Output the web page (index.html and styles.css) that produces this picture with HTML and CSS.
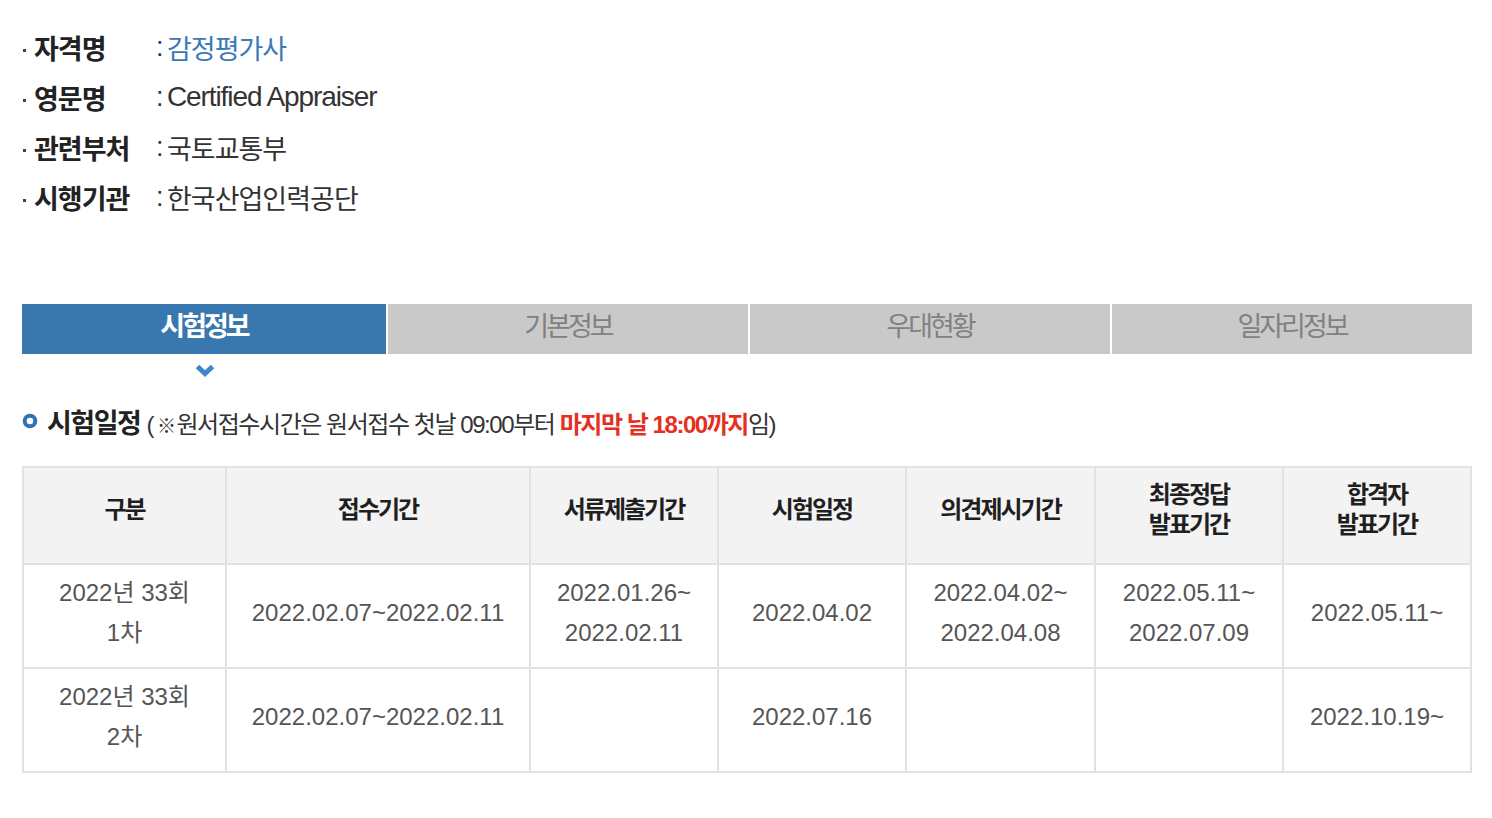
FILE: index.html
```html
<!DOCTYPE html>
<html lang="ko">
<head>
<meta charset="utf-8">
<title>감정평가사</title>
<link rel="stylesheet" href="styles.css">
</head>
<body>
<div class="page">
  <ul class="info">
    <li class="info-row"><span class="info-label">자격명</span><span class="info-colon">:</span><span class="info-value info-value--link">감정평가사</span></li>
    <li class="info-row"><span class="info-label">영문명</span><span class="info-colon">:</span><span class="info-value info-value--en">Certified Appraiser</span></li>
    <li class="info-row"><span class="info-label">관련부처</span><span class="info-colon">:</span><span class="info-value">국토교통부</span></li>
    <li class="info-row"><span class="info-label">시행기관</span><span class="info-colon">:</span><span class="info-value">한국산업인력공단</span></li>
  </ul>

  <nav class="tabs">
    <a class="tab tab--active">시험정보<svg class="tab-chevron" width="20" height="13" viewBox="0 0 20 13"><polyline points="2.5,2.5 10,9.5 17.5,2.5" fill="none" stroke="#3d86c8" stroke-width="5" stroke-linejoin="miter"/></svg></a>
    <a class="tab">기본정보</a>
    <a class="tab">우대현황</a>
    <a class="tab">일자리정보</a>
  </nav>

  <h3 class="section-title">
    <svg class="section-bullet" width="16" height="16" viewBox="0 0 16 16"><circle cx="8" cy="8" r="5.3" fill="#fff" stroke="#2f72b6" stroke-width="4"/></svg>
    <span class="section-name">시험일정</span>
    <span class="section-note">(<span class="note-mark">※</span>원서접수시간은 원서접수 첫날 09:00부터 <strong class="note-red">마지막 날 18:00까지</strong>임)</span>
  </h3>

  <table class="schedule">
    <colgroup>
      <col class="c1"><col class="c2"><col class="c3"><col class="c4"><col class="c5"><col class="c6"><col class="c7">
    </colgroup>
    <thead>
      <tr>
        <th>구분</th>
        <th>접수기간</th>
        <th>서류제출기간</th>
        <th>시험일정</th>
        <th>의견제시기간</th>
        <th>최종정답<br>발표기간</th>
        <th>합격자<br>발표기간</th>
      </tr>
    </thead>
    <tbody>
      <tr>
        <td>2022년 33회<br>1차</td>
        <td>2022.02.07~2022.02.11</td>
        <td>2022.01.26~<br>2022.02.11</td>
        <td>2022.04.02</td>
        <td>2022.04.02~<br>2022.04.08</td>
        <td>2022.05.11~<br>2022.07.09</td>
        <td>2022.05.11~</td>
      </tr>
      <tr>
        <td>2022년 33회<br>2차</td>
        <td>2022.02.07~2022.02.11</td>
        <td></td>
        <td>2022.07.16</td>
        <td></td>
        <td></td>
        <td>2022.10.19~</td>
      </tr>
    </tbody>
  </table>
</div>
</body>
</html>
```

FILE: styles.css
```css
* { box-sizing: border-box; }

html, body {
  margin: 0;
  padding: 0;
  background: #fff;
}

body {
  font-family: "Liberation Sans", "Noto Sans CJK KR", Arial, sans-serif;
  color: #333;
}

.page {
  width: 1494px;
  padding: 22px 22px 0 22px;
}

/* info list */
.info {
  list-style: none;
  margin: 0;
  padding: 0;
}

.info-row {
  display: flex;
  align-items: center;
  height: 50px;
  font-size: 27px;
  letter-spacing: -1px;
  color: #333;
}

.info-label {
  position: relative;
  width: 134px;
  padding-left: 12px;
  font-weight: 700;
  color: #222;
}

.info-label::before {
  content: "";
  position: absolute;
  left: 1px;
  top: 54%;
  width: 3px;
  height: 3px;
  background: #444;
}

.info-colon {
  width: 11px;
  font-weight: 400;
  letter-spacing: 0;
}

.info-value {
  color: #333;
}

.info-value--link {
  color: #3a7ab8;
}

.info-value--en {
  font-size: 28px;
  letter-spacing: -1.1px;
}

/* tabs */
.tabs {
  display: flex;
  gap: 2px;
  margin-top: 82px;
  height: 50px;
}

.tab {
  position: relative;
  flex: 1;
  display: flex;
  align-items: center;
  justify-content: center;
  background: #c9c9c9;
  color: #818181;
  font-size: 27px;
  letter-spacing: -3px;
  text-decoration: none;
  padding-bottom: 10px;
}

.tab--active {
  flex: 0 0 364px;
  background: #3878ae;
  color: #fff;
  font-weight: 700;
}

.tab-chevron {
  position: absolute;
  left: 50%;
  top: 60px;
  margin-left: -9px;
}

/* section title */
.section-title {
  display: flex;
  align-items: center;
  margin: 47px 0 0 0;
  height: 40px;
  font-weight: 400;
}

.section-bullet {
  margin-right: 9px;
  flex: none;
}

.section-name {
  font-size: 27px;
  font-weight: 700;
  letter-spacing: -1.5px;
  color: #222;
  margin-right: 6px;
}

.section-note {
  font-size: 24px;
  letter-spacing: -1.45px;
  color: #333;
  padding-top: 2px;
}

.note-mark {
  font-size: 19px;
  font-weight: 700;
  margin: 0 2px 0 4px;
}

.note-red {
  color: #e5301f;
  font-weight: 700;
}

/* table */
.schedule {
  margin-top: 25px;
  width: 1448px;
  border-collapse: collapse;
  table-layout: fixed;
  border: 2px solid #e2e2e2;
}

.c1 { width: 203px; }
.c2 { width: 304px; }
.c3 { width: 188px; }
.c4 { width: 188px; }
.c5 { width: 189px; }
.c6 { width: 188px; }
.c7 { width: 188px; }

.schedule th,
.schedule td {
  border: 2px solid #e2e2e2;
  text-align: center;
  vertical-align: middle;
  padding: 0;
}

.schedule th {
  height: 97px;
  background: #f3f3f3;
  font-size: 24px;
  font-weight: 700;
  letter-spacing: -2px;
  line-height: 30px;
  color: #1f1f1f;
  padding-bottom: 12px;
}

.schedule td {
  height: 104px;
  font-size: 24px;
  line-height: 40px;
  color: #555;
  padding-bottom: 6px;
}
```
